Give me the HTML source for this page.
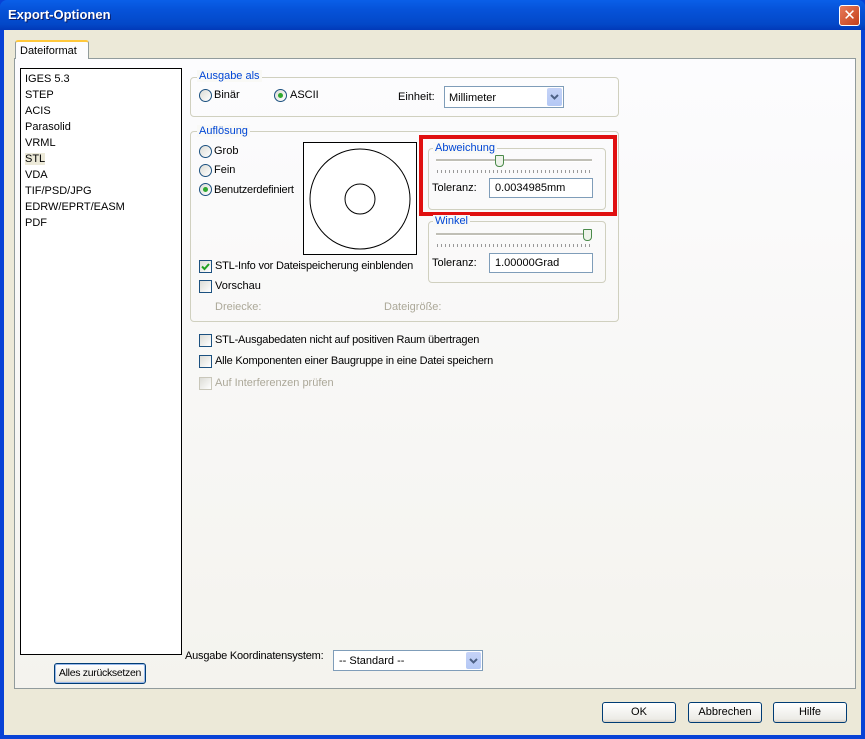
<!DOCTYPE html><html><head><style>
body{margin:0;width:865px;height:739px;overflow:hidden;font-family:"Liberation Sans","DejaVu Sans",sans-serif;font-size:11px;color:#000;white-space:nowrap}
.a{position:absolute}
#win{left:0;top:0;width:865px;height:739px;background:#0842d6}
#title{left:0;top:0;width:865px;height:30px;background:linear-gradient(#0a5fe8,#0653da 30%,#0348c8 80%,#0239b8);border-radius:7px 7px 0 0}
#body{left:4px;top:30px;width:857px;height:705px;background:#ece9d8}
.panel{left:14px;top:58px;width:840px;height:629px;background:linear-gradient(#fcfcfe,#f4f3ee);border:1px solid #919b9c}
.gb{border:1px solid #d0d0bf;border-radius:4px}
.gl{background:#f9f9f6;color:#0046d5;padding:0 2px}
.rad{width:11px;height:11px;border:1px solid #1c5180;border-radius:50%;background:linear-gradient(135deg,#dcdcd6,#fff)}
.dot{position:absolute;left:3px;top:3px;width:5px;height:5px;border-radius:50%;background:#2fa82f}
.chk{width:11px;height:11px;border:1px solid #1c5180;background:linear-gradient(135deg,#dcdcd6,#fff)}
.inp{background:#fff;border:1px solid #7f9db9}
.btn{border:1px solid #003c74;border-radius:3px;background:linear-gradient(#fff,#ecebe6 85%,#d6d0c5);text-align:center;line-height:19px}
.dd{position:absolute;right:1px;top:1px;width:15px;bottom:1px;background:linear-gradient(#c6d3f7,#b4c8f5);border-radius:2px}
.tick{background:repeating-linear-gradient(90deg,#999 0 1px,transparent 1px 4px);height:3px}
</style></head><body>
<div id="win" class="a"></div>
<div id="title" class="a"></div>
<div class="a" style="left:8px;top:7px;color:#fff;font-weight:bold;font-size:13px;text-shadow:1px 1px #0a1a60">Export-Optionen</div>
<div class="a" style="left:839px;top:5px;width:19px;height:19px;border:1px solid #fff;border-radius:3px;background:linear-gradient(135deg,#e77a5a,#c4401a);color:#fff;font-weight:bold;font-size:15px;text-align:center;line-height:19px">✕</div>
<div id="body" class="a"></div>
<div class="a panel"></div>
<div class="a" style="left:15px;top:40px;width:68px;height:17px;background:#fcfcfe;border:1px solid #919b9c;border-bottom:none;border-top:2px solid #ffc83c;border-radius:3px 3px 0 0;line-height:18px;padding-left:4px">Dateiformat</div>
<div class="a" style="left:20px;top:68px;width:160px;height:585px;background:#fff;border:1px solid #000"></div>
<div class="a" style="left:25px;top:71px;line-height:16px">IGES 5.3<br>STEP<br>ACIS<br>Parasolid<br>VRML<br><span style="background:#ece9d8">STL</span><br>VDA<br>TIF/PSD/JPG<br>EDRW/EPRT/EASM<br>PDF</div>
<div class="a btn" style="left:54px;top:663px;width:90px;height:19px;box-shadow:inset 0 0 0 1px #98b8ea;font-size:10.5px;letter-spacing:-0.3px">Alles zurücksetzen</div>

<div class="a gb" style="left:190px;top:77px;width:427px;height:38px"></div>
<div class="a gl" style="left:197px;top:70px">Ausgabe als</div>
<div class="a rad" style="left:199px;top:89px"></div><div class="a" style="left:214px;top:89px">Binär</div>
<div class="a rad" style="left:274px;top:89px"><div class="dot"></div></div><div class="a" style="left:290px;top:89px">ASCII</div>
<div class="a" style="left:398px;top:91px">Einheit:</div>
<div class="a inp" style="left:444px;top:86px;width:118px;height:20px"><span style="position:absolute;left:4px;top:5px">Millimeter</span><div class="dd"><svg width="15" height="18"><path d="M4 7l3.5 3.5L11 7" fill="none" stroke="#4d6185" stroke-width="2"/></svg></div></div>

<div class="a gb" style="left:190px;top:131px;width:427px;height:189px"></div>
<div class="a gl" style="left:197px;top:125px">Auflösung</div>
<div class="a rad" style="left:199px;top:145px"></div><div class="a" style="left:214px;top:145px">Grob</div>
<div class="a rad" style="left:199px;top:164px"></div><div class="a" style="left:214px;top:164px">Fein</div>
<div class="a rad" style="left:199px;top:183px"><div class="dot"></div></div><div class="a" style="left:214px;top:184px;letter-spacing:-0.2px">Benutzerdefiniert</div>
<svg class="a" style="left:303px;top:142px" width="114" height="113"><rect x="0.5" y="0.5" width="113" height="112" fill="#fff" stroke="#000"/><circle cx="57" cy="57" r="50" fill="none" stroke="#000"/><circle cx="57" cy="57" r="15" fill="none" stroke="#000"/></svg>
<div class="a chk" style="left:199px;top:260px"><svg width="11" height="11"><path d="M2 5.5l2.5 2.5L9 3" fill="none" stroke="#21a121" stroke-width="2"/></svg></div><div class="a" style="left:215px;top:260px;letter-spacing:-0.2px">STL-Info vor Dateispeicherung einblenden</div>
<div class="a chk" style="left:199px;top:280px"></div><div class="a" style="left:215px;top:280px">Vorschau</div>
<div class="a" style="left:215px;top:301px;color:#aca899">Dreiecke:</div>
<div class="a" style="left:384px;top:301px;color:#aca899">Dateigröße:</div>

<div class="a gb" style="left:428px;top:148px;width:176px;height:60px"></div>
<div class="a gl" style="left:433px;top:142px">Abweichung</div>
<div class="a" style="left:436px;top:159px;width:156px;height:2px;background:#c0bfb6;border-bottom:1px solid #fff"></div>
<div class="a" style="left:495px;top:155px;width:7px;height:10px;border:1px solid #4a8a4a;border-radius:1px 1px 4px 4px;background:#eef3ea"></div>
<div class="a tick" style="left:437px;top:170px;width:155px"></div>
<div class="a" style="left:432px;top:182px">Toleranz:</div>
<div class="a inp" style="left:489px;top:178px;width:102px;height:18px"><span style="position:absolute;left:5px;top:3px">0.0034985mm</span></div>
<div class="a" style="left:419px;top:135px;width:190px;height:73px;border:4px solid #e01010"></div>

<div class="a gb" style="left:428px;top:221px;width:176px;height:60px"></div>
<div class="a gl" style="left:433px;top:215px">Winkel</div>
<div class="a" style="left:436px;top:233px;width:156px;height:2px;background:#c0bfb6;border-bottom:1px solid #fff"></div>
<div class="a" style="left:583px;top:229px;width:7px;height:10px;border:1px solid #4a8a4a;border-radius:1px 1px 4px 4px;background:#eef3ea"></div>
<div class="a tick" style="left:437px;top:244px;width:155px"></div>
<div class="a" style="left:432px;top:257px">Toleranz:</div>
<div class="a inp" style="left:489px;top:253px;width:102px;height:18px"><span style="position:absolute;left:5px;top:3px">1.00000Grad</span></div>

<div class="a chk" style="left:199px;top:334px"></div><div class="a" style="left:215px;top:334px;letter-spacing:-0.2px">STL-Ausgabedaten nicht auf positiven Raum übertragen</div>
<div class="a chk" style="left:199px;top:355px"></div><div class="a" style="left:215px;top:355px;letter-spacing:-0.2px">Alle Komponenten einer Baugruppe in eine Datei speichern</div>
<div class="a chk" style="left:199px;top:377px;border-color:#c9c7ba"></div><div class="a" style="left:215px;top:377px;color:#aca899">Auf Interferenzen prüfen</div>

<div class="a" style="left:185px;top:650px;letter-spacing:-0.2px">Ausgabe Koordinatensystem:</div>
<div class="a inp" style="left:333px;top:650px;width:148px;height:19px"><span style="position:absolute;left:5px;top:4px">-- Standard --</span><div class="dd"><svg width="15" height="17"><path d="M4 7l3.5 3.5L11 7" fill="none" stroke="#4d6185" stroke-width="2"/></svg></div></div>

<div class="a btn" style="left:602px;top:702px;width:72px;height:19px">OK</div>
<div class="a btn" style="left:688px;top:702px;width:72px;height:19px">Abbrechen</div>
<div class="a btn" style="left:773px;top:702px;width:72px;height:19px">Hilfe</div>
</body></html>
